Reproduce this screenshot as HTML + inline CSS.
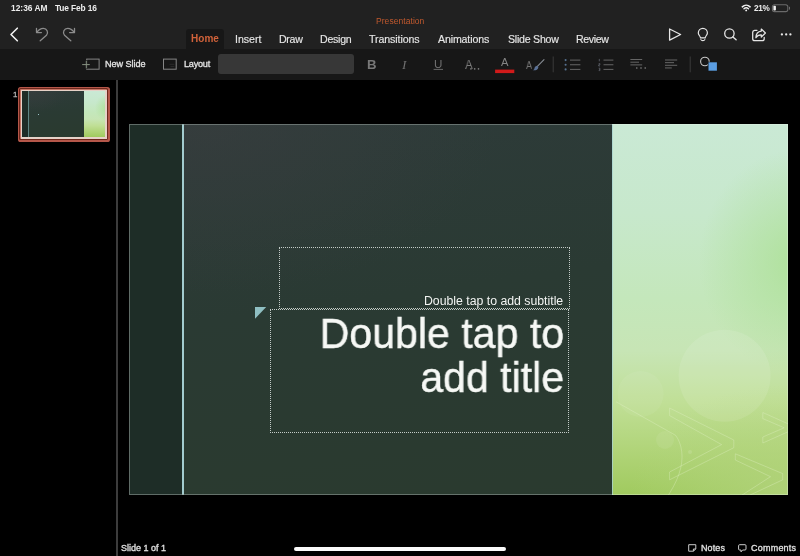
<!DOCTYPE html>
<html>
<head>
<meta charset="utf-8">
<title>Presentation</title>
<style>
*{box-sizing:border-box;margin:0;padding:0}
html,body{width:800px;height:556px;overflow:hidden;background:#000}
body{font-family:"Liberation Sans",sans-serif;color:#fff;position:relative;font-size:0;line-height:0}
.abs{position:absolute}
.t{position:absolute;white-space:nowrap;line-height:1;will-change:transform;font-family:"Liberation Sans",sans-serif}
svg{position:absolute;overflow:visible}
#top{left:0;top:0;width:800px;height:49px;background:#212121}
#ribbon{left:0;top:49px;width:800px;height:31px;background:#171717}
#hometab{left:185.6px;top:29.2px;width:38.4px;height:20px;background:#171717;border-radius:3px 3px 0 0}
#slide{left:129px;top:124px;width:658.8px;height:371.3px;background:#2d3935;overflow:hidden}
</style>
</head>
<body>
<!-- chrome backgrounds -->
<div id="top" class="abs"></div>
<div id="ribbon" class="abs"></div>
<div id="hometab" class="abs"></div>
<div class="abs" style="left:218.3px;top:54.2px;width:135.5px;height:20.2px;background:#373737;border-radius:3px"></div>

<!-- left panel divider -->
<div class="abs" style="left:116px;top:80px;width:2px;height:476px;background:#3c3c3c"></div>

<!-- thumbnail -->
<div class="abs" style="left:17.8px;top:86.8px;width:92px;height:54.8px;border-radius:2.6px;background:#b5574a"></div>
<div class="abs" style="left:19px;top:88px;width:89.2px;height:52.2px;border-radius:1.6px;background:#6e281c"></div>
<div class="abs" style="left:19.8px;top:88.8px;width:87.6px;height:50.6px;border-radius:1px;background:#c47363"></div>
<div class="abs" style="left:20.8px;top:89.7px;width:85.8px;height:48.9px;background:#e6d2c8"></div>
<div class="abs" id="thumb" style="left:22.3px;top:91.1px;width:82.5px;height:45.8px;background:#2b3a34;overflow:hidden">
  <div class="abs" style="left:0;top:0;width:83px;height:46px;background:radial-gradient(ellipse 44% 46% at 12% 0%,rgba(56,61,62,.7),rgba(56,61,62,0) 100%),linear-gradient(172deg,#2e3b3a 0%,#2a3a33 45%,#2a3a2e 100%)"></div>
  <div class="abs" style="left:0;top:0;width:5.8px;height:46px;background:#1e2d27"></div>
  <div class="abs" style="left:5.7px;top:0;width:0.8px;height:46px;background:#5f8583"></div>
  <div class="abs" style="left:61.3px;top:0;width:22px;height:46px;background:radial-gradient(ellipse 55% 30% at 104% 37%,rgba(172,224,150,.85),rgba(172,224,150,0) 100%),linear-gradient(180deg,#cae9d5 0%,#c7e8cc 24%,#c4e7bb 47%,#c7e5b5 61%,#c0df96 75%,#b0d478 88%,#a0ca5e 100%)"></div>
  <div class="abs" style="left:15.5px;top:22.6px;width:1.2px;height:1.2px;background:#9cc4c6"></div>
</div>

<!-- slide -->
<div id="slide" class="abs">
  <div class="abs" style="left:0;top:0;width:660px;height:372px;background:radial-gradient(ellipse 44% 46% at 12% 0%,rgba(56,61,62,.7),rgba(58,62,64,0) 100%),linear-gradient(172deg,#2e3b3a 0%,#2a3a33 45%,#2a3a2e 100%)"></div>
  <div class="abs" style="left:0;top:0;width:53px;height:372px;background:#1e2d27"></div>
  <div class="abs" style="left:53px;top:0;width:2.2px;height:372px;background:#a3cccf"></div>
  <!-- green panel -->
  <div class="abs" style="left:483.2px;top:0;width:177px;height:372px;background:radial-gradient(ellipse 55% 30% at 104% 37%,rgba(172,224,150,.85),rgba(172,224,150,0) 100%),radial-gradient(ellipse 90% 30% at 100% 100%,rgba(180,212,128,.75),rgba(180,212,128,0) 100%),linear-gradient(180deg,#cae9d5 0%,#c7e8cc 24%,#c4e7bb 47%,#c7e5b5 61%,#c0df96 75%,#b0d478 88%,#a0ca5e 100%)"></div>
  <div class="abs" style="left:482.8px;top:0;width:1px;height:372px;background:#a9d3d0;opacity:.8"></div>
  <svg style="left:483px;top:0" width="177" height="372" viewBox="612 124 177 372" fill="none">
    <circle cx="724.6" cy="375.8" r="46" fill="#fff" fill-opacity=".10"/>
    <circle cx="640.6" cy="394" r="23" fill="#fff" fill-opacity=".06"/>
    <circle cx="665" cy="440" r="9" fill="#fff" fill-opacity=".07"/>
    <circle cx="690" cy="452" r="2" fill="#fff" fill-opacity=".12"/>
    <g stroke="#e4f4c8" stroke-opacity=".42" stroke-width=".8" stroke-linejoin="round">
      <path d="M669.6 408 L733.8 440 L733.8 447.7 L669.6 479.8 L669.6 472 L721.6 444.6 L669.6 415.6 Z"/>
      <path d="M748 496 L782.7 479.8 L782.7 473.6 L735.3 453.8 L735.3 460 L770.5 476.7 L741.4 495.5"/>
      <path d="M790 424.7 L762.8 412.5 L762.8 418.6 L784.2 427.8 L762.8 437 L762.8 443 L790 430.9"/>
      <path d="M616.1 401.8 L675.7 435.4 C682 444 684.5 458 679 474 C676 483 671 491 666 499"/>
    </g>
  </svg>
  <!-- slide edge -->
  <div class="abs" style="left:0;top:0;width:483px;height:371.3px;border:1px solid rgba(150,160,156,.55);border-right:0"></div><div class="abs" style="left:483px;top:0;width:175.8px;height:371.3px;border:1px solid rgba(235,245,235,.35);border-left:0"></div>
  <!-- placeholders -->
  <div class="abs" style="left:149.6px;top:122.6px;width:291.6px;height:62px;border:1px dotted #c4ccc8"></div>
  <div class="abs" style="left:141.2px;top:184.6px;width:298.6px;height:124.6px;border:1px dotted #c4ccc8"></div>
  <svg style="left:125.6px;top:183px" width="12" height="12"><path d="M0 0H11.2L0 11.8Z" fill="#8fbfc2"/></svg>
  <div class="t" style="right:224.5px;top:171.3px;font-size:12.3px;color:#f2f4f2;letter-spacing:-0.01px">Double tap to add subtitle</div>
  <div class="t" style="right:223.9px;top:187px;font-size:43.4px;line-height:44.4px;color:#f6f8f5;text-align:right;-webkit-text-stroke:0.45px #f6f8f5;transform-origin:100% 0;transform:scaleX(.947);letter-spacing:0px">Double tap to<br>add title</div>
</div>

<!-- home indicator -->
<div class="abs" style="left:293.6px;top:546.8px;width:212.6px;height:3.8px;border-radius:2px;background:#fbfbfb"></div>

<!-- icons overlay -->
<svg style="left:0;top:0" width="800" height="556" viewBox="0 0 800 556" fill="none">
  <!-- wifi -->
  <g stroke="#f0f0f0" stroke-linecap="round" fill="none">
    <path d="M742.3 6.8 A5.7 5.7 0 0 1 750.1 6.8" stroke-width="1.6"/>
    <path d="M744 8.7 A3.3 3.3 0 0 1 748.4 8.7" stroke-width="1.5"/>
  </g>
  <circle cx="746.2" cy="10.4" r="0.95" fill="#f0f0f0"/>
  <!-- battery -->
  <rect x="772.4" y="4.7" width="15.4" height="6.9" rx="2.1" stroke="#6a6a6a" stroke-width="1.05"/>
  <rect x="773.4" y="5.7" width="2.5" height="4.9" rx="0.8" fill="#f2f2f2"/>
  <path d="M789.5 7.2 V9.2" stroke="#6a6a6a" stroke-width="1" stroke-linecap="round"/>

  <!-- back -->
  <path d="M17.3 28.2 L11 34.5 L17.3 40.8" stroke="#f2f2f2" stroke-width="1.6" stroke-linecap="round" stroke-linejoin="round"/>
  <!-- undo / redo -->
  <g id="undo" stroke="#8c8c8c" stroke-width="1.3" stroke-linecap="round" stroke-linejoin="round">
    <path d="M36.5 28.4 V32.6 H41.4"/>
    <path d="M37 32.2 C38.6 29.8 41 28.3 43.3 28.3 A4.25 4.25 0 0 1 46.5 35.3 L40.2 40.8"/>
  </g>
  <g stroke="#8c8c8c" stroke-width="1.3" stroke-linecap="round" stroke-linejoin="round" transform="translate(111,0) scale(-1,1)">
    <path d="M36.5 28.4 V32.6 H41.4"/>
    <path d="M37 32.2 C38.6 29.8 41 28.3 43.3 28.3 A4.25 4.25 0 0 1 46.5 35.3 L40.2 40.8"/>
  </g>

  <!-- play -->
  <path d="M669.6 29 L680.6 34.5 L669.6 40.1 Z" stroke="#e6e6e6" stroke-width="1.3" stroke-linejoin="round"/>
  <!-- bulb -->
  <g stroke="#e6e6e6" stroke-width="1.2" stroke-linecap="round" stroke-linejoin="round">
    <path d="M700.5 37.9 C700.5 36.2 698.3 35.1 698.3 32.9 A4.55 4.55 0 0 1 707.4 32.9 C707.4 35.1 705.2 36.2 705.2 37.9 Z"/>
    <path d="M700.9 39.6 C701.4 40.9 704.3 40.9 704.8 39.6" stroke-width="1.1"/>
  </g>
  <!-- search -->
  <circle cx="729.4" cy="33.5" r="4.7" stroke="#e6e6e6" stroke-width="1.3"/>
  <path d="M732.9 37 L736.1 39.7" stroke="#e6e6e6" stroke-width="1.4" stroke-linecap="round"/>
  <!-- share -->
  <g stroke="#e6e6e6" stroke-width="1.25" stroke-linecap="round" stroke-linejoin="round">
    <path d="M757 30.3 H754.6 A2 2 0 0 0 752.7 32.3 V38.7 A2 2 0 0 0 754.7 40.7 H762.2 A2 2 0 0 0 764.2 38.7 V37.4"/>
    <path d="M761.3 29 L765.4 33 L761.3 37 V34.9 C758.6 34.8 757 35.8 755.9 37.8 C756 34 758 31.4 761.3 31.1 Z"/>
  </g>
  <!-- dots -->
  <circle cx="781.9" cy="34.4" r="1.15" fill="#e9e9e9"/>
  <circle cx="786.2" cy="34.4" r="1.15" fill="#e9e9e9"/>
  <circle cx="790.4" cy="34.4" r="1.15" fill="#e9e9e9"/>

  <!-- ribbon: new slide -->
  <rect x="86.7" y="59.1" width="12.4" height="10.1" stroke="#868686" stroke-width="1"/>
  <path d="M86.3 60.2 V69" stroke="#171717" stroke-width="2.4"/><path d="M82.2 64.6 H89.8 M86.3 60.8 V68.5" stroke="#879282" stroke-width="1"/>
  <!-- layout -->
  <rect x="163.5" y="59.1" width="12.7" height="10.1" stroke="#868686" stroke-width="1"/>
  <path d="M169.5 64.3 H174.3 M170.5 66.6 H174.3" stroke="#2b2b2b" stroke-width="1"/>

  <!-- B I U -->
  <path d="M433.6 69.4 H443" stroke="#707070" stroke-width="0.9"/>
  <!-- A dots -->
  <circle cx="470.9" cy="68.9" r="0.8" fill="#808080"/>
  <circle cx="474.7" cy="68.9" r="0.8" fill="#808080"/>
  <circle cx="478.5" cy="68.9" r="0.8" fill="#808080"/>
  <!-- red bar -->
  <rect x="495.1" y="69.6" width="19.2" height="3.5" fill="#d11a1a"/>
  <!-- brush -->
  <path d="M544 59.7 L537.4 66.4" stroke="#858b92" stroke-width="1.1" stroke-linecap="round"/>
  <path d="M537.4 65.8 C535.8 66 534.6 67 534.4 68.4 C534.2 69.4 533.4 69.9 532.6 70.1 C534.8 70.8 538 70 538.4 67.2 Z" fill="#5b7196"/>
  <!-- separators -->
  <path d="M553.2 56.5 V72.3 M690.2 56.5 V72.3" stroke="#3a3a3a" stroke-width="1"/>
  <!-- bullets -->
  <g fill="#56718f"><circle cx="565.6" cy="60.1" r="1.05"/><circle cx="565.6" cy="64.75" r="1.05"/><circle cx="565.6" cy="69.4" r="1.05"/></g>
  <path d="M570 60.1 H580.4 M570 64.75 H580.4 M570 69.4 H580.4" stroke="#747474" stroke-width=".85"/>
  <!-- numbered -->
  <path d="M599.3 58.9 V61.3 M598.7 63.6 H599.9 V64.8 H598.7 V66 H599.9 M598.7 68.2 H599.9 V70.6 H598.7 M599.1 69.4 H599.9" stroke="#6a6f78" stroke-width="0.7"/>
  <path d="M603.5 60.1 H613.4 M603.5 64.75 H613.4 M603.5 69.4 H613.4" stroke="#747474" stroke-width=".85"/>
  <!-- align w/ dots -->
  <path d="M630.4 59.5 H642.2 M630.4 62.2 H639 M630.4 64.9 H642.2" stroke="#747474" stroke-width=".85"/>
  <g fill="#8a8a8a"><circle cx="636.8" cy="68" r="0.8"/><circle cx="641" cy="68" r="0.8"/><circle cx="645.2" cy="68" r="0.8"/></g>
  <!-- align -->
  <path d="M665 60 H677.2 M665 62.65 H674 M665 65.3 H677.2 M665 67.95 H671.8" stroke="#747474" stroke-width=".85"/>
  <!-- shape -->
  <circle cx="704.9" cy="61.5" r="4.3" stroke="#c9c9c9" stroke-width="1.1"/>
  <rect x="707.8" y="61.7" width="9.6" height="9.5" fill="#171717"/>
  <rect x="708.5" y="62.3" width="8.4" height="8.4" fill="#5b9ee2"/>

  <!-- notes icon -->
  <path d="M688.7 544.7 H695.8 V549 L693.4 551.2 H688.7 Z M695.6 549 H693.4 V551" stroke="#d4d4d4" stroke-width="0.95" stroke-linejoin="round"/>
  <!-- comments icon -->
  <path d="M739.6 544.7 H745 A1 1 0 0 1 746 545.7 V549 A1 1 0 0 1 745 550 H742.6 L741 551.9 V550 H739.6 A1 1 0 0 1 738.6 549 V545.7 A1 1 0 0 1 739.6 544.7 Z" stroke="#d4d4d4" stroke-width="0.95" stroke-linejoin="round"/>
</svg>

<!-- B I U A glyphs -->
<div class="t" style="left:366.9px;top:58.3px;font-size:13.2px;font-weight:bold;color:#787878">B</div>
<div class="t" style="left:402.4px;top:57.8px;font-size:13.4px;font-style:italic;color:#6e6e6e;font-family:'Liberation Serif',serif">I</div>
<div class="t" style="left:434.2px;top:57.7px;font-size:11.6px;color:#707070">U</div>
<div class="t" style="left:465.3px;top:57.6px;font-size:13.6px;color:#7a7a7a;transform-origin:0 0;transform:scaleX(.84)">A</div>
<div class="t" style="left:501.2px;top:56.7px;font-size:11.2px;color:#848484">A</div>
<div class="t" style="left:526.4px;top:59.6px;font-size:11.4px;color:#747474;transform-origin:0 0;transform:scaleX(.8)">A</div>

<div class="t" style="left:11.30px;top:3.89px;font-size:8.4px;font-weight:bold;color:#ececec;letter-spacing:0.016px;">12:36 AM</div>
<div class="t" style="left:55.40px;top:3.89px;font-size:8.4px;font-weight:bold;color:#ececec;letter-spacing:-0.144px;">Tue Feb 16</div>
<div class="t" style="left:753.80px;top:4.56px;font-size:8.2px;font-weight:bold;color:#ececec;letter-spacing:-0.264px;">21%</div>
<div class="t" style="left:375.80px;top:17.00px;font-size:8.5px;font-weight:normal;color:#c0592e;letter-spacing:0.055px;">Presentation</div>
<div class="t" style="left:191.40px;top:34.23px;font-size:10.0px;font-weight:bold;color:#d0623a;letter-spacing:0.051px;">Home</div>
<div class="t" style="left:235.40px;top:33.63px;font-size:10.6px;font-weight:normal;color:#e6e6e6;letter-spacing:-0.033px;-webkit-text-stroke:0.15px #e6e6e6;">Insert</div>
<div class="t" style="left:279.00px;top:33.63px;font-size:10.6px;font-weight:normal;color:#e6e6e6;letter-spacing:-0.284px;-webkit-text-stroke:0.15px #e6e6e6;">Draw</div>
<div class="t" style="left:319.50px;top:33.63px;font-size:10.6px;font-weight:normal;color:#e6e6e6;letter-spacing:-0.247px;-webkit-text-stroke:0.15px #e6e6e6;">Design</div>
<div class="t" style="left:369.00px;top:33.63px;font-size:10.6px;font-weight:normal;color:#e6e6e6;letter-spacing:-0.075px;-webkit-text-stroke:0.15px #e6e6e6;">Transitions</div>
<div class="t" style="left:438.30px;top:33.63px;font-size:10.6px;font-weight:normal;color:#e6e6e6;letter-spacing:-0.131px;-webkit-text-stroke:0.15px #e6e6e6;">Animations</div>
<div class="t" style="left:507.50px;top:33.63px;font-size:10.6px;font-weight:normal;color:#e6e6e6;letter-spacing:-0.230px;-webkit-text-stroke:0.15px #e6e6e6;">Slide Show</div>
<div class="t" style="left:575.50px;top:33.63px;font-size:10.6px;font-weight:normal;color:#e6e6e6;letter-spacing:-0.358px;-webkit-text-stroke:0.15px #e6e6e6;">Review</div>
<div class="t" style="left:105.00px;top:59.90px;font-size:9.1px;font-weight:normal;color:#e4e4e4;letter-spacing:-0.061px;-webkit-text-stroke:0.3px #e4e4e4;">New Slide</div>
<div class="t" style="left:184.00px;top:59.90px;font-size:9.1px;font-weight:normal;color:#e4e4e4;letter-spacing:-0.219px;-webkit-text-stroke:0.3px #e4e4e4;">Layout</div>
<div class="t" style="left:13.10px;top:91.41px;font-size:7.9px;font-weight:normal;color:#b2b2b2;letter-spacing:0.000px;-webkit-text-stroke:0.3px #b2b2b2;">1</div>
<div class="t" style="left:120.50px;top:544.18px;font-size:9.0px;font-weight:normal;color:#e2e2e2;letter-spacing:-0.003px;-webkit-text-stroke:0.3px #e2e2e2;">Slide 1 of 1</div>
<div class="t" style="left:701.00px;top:544.18px;font-size:9.0px;font-weight:normal;color:#e2e2e2;letter-spacing:0.097px;-webkit-text-stroke:0.3px #e2e2e2;">Notes</div>
<div class="t" style="left:751.00px;top:544.18px;font-size:9.0px;font-weight:normal;color:#e2e2e2;letter-spacing:0.223px;-webkit-text-stroke:0.3px #e2e2e2;">Comments</div>
</body>
</html>
